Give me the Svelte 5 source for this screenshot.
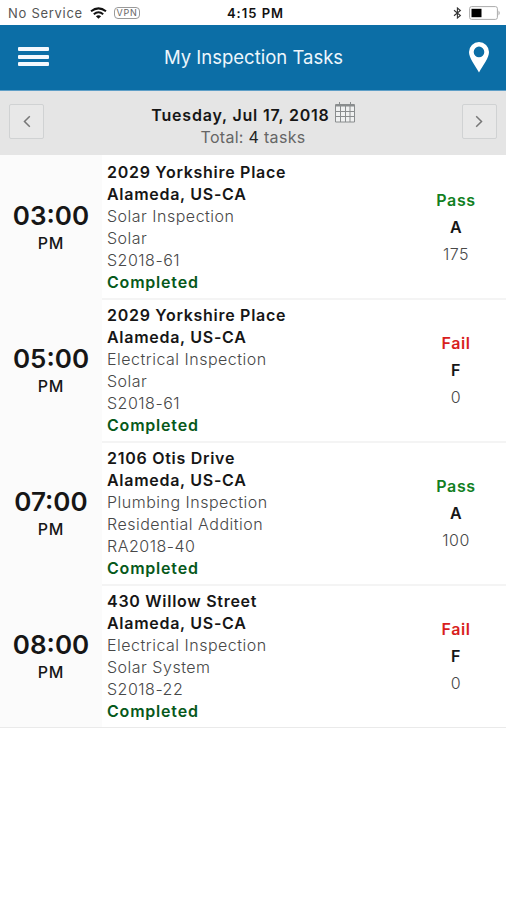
<script>
	let tasks = $state([
		{ id: 1, time: '03:00', street: '2029 Yorkshire Place', type: 'Solar Inspection', project: 'Solar', code: 'S2018-61', result: 'Pass', grade: 'A', score: 175 },
		{ id: 2, time: '05:00', street: '2029 Yorkshire Place', type: 'Electrical Inspection', project: 'Solar', code: 'S2018-61', result: 'Fail', grade: 'F', score: 0 },
		{ id: 3, time: '07:00', street: '2106 Otis Drive', type: 'Plumbing Inspection', project: 'Residential Addition', code: 'RA2018-40', result: 'Pass', grade: 'A', score: 100 },
		{ id: 4, time: '08:00', street: '430 Willow Street', type: 'Electrical Inspection', project: 'Solar System', code: 'S2018-22', result: 'Fail', grade: 'F', score: 0 }
	]);
</script>

<div class="app">
	<div class="status-bar">
		<div class="carrier">
			<span>No Service</span>
			<svg class="wifi" width="17" height="12" viewBox="0 0 17 12" fill="none" stroke="#111" stroke-width="2">
				<path d="M1 4.3Q8.5 -1.6 16 4.3M3.8 7.2Q8.5 3.4 13.2 7.2" />
				<path d="M8.5 11.8L5.9 9.2Q8.5 7.2 11.1 9.2Z" fill="#111" stroke="none" />
			</svg>
			<span class="vpn">VPN</span>
		</div>
		<span class="clock">4:15 PM</span>
		<div class="power">
			<svg width="9" height="12" viewBox="0 0 9 12" fill="none" stroke="#333" stroke-width="1.1">
				<path d="M1 3.3L7.4 8.5L4.4 11V1L7.4 3.5L1 8.7" />
			</svg>
			<svg width="32" height="14" viewBox="0 0 32 14">
				<rect x="0.6" y="0.6" width="27.8" height="12.8" rx="2" fill="#fff" stroke="#aaa" />
				<rect x="2.5" y="2.8" width="10" height="8.4" fill="#000" />
				<path d="M29.5 4.5Q32 7 29.5 9.5Z" fill="#aaa" />
			</svg>
		</div>
	</div>

	<header>
		<button type="button" class="menu" aria-label="Menu">
			<i></i><i></i><i></i>
		</button>
		<h1>My Inspection Tasks</h1>
		<button type="button" class="map" aria-label="Map">
			<svg width="20" height="31" viewBox="0 0 20 31">
				<path fill="#fff" fill-rule="evenodd" d="M10 0A10 10 0 0 0 0 10C0 16 5.5 22.5 10 30.5C14.5 22.5 20 16 20 10A10 10 0 0 0 10 0ZM10 4.6A5.3 5.3 0 1 1 10 15.2A5.3 5.3 0 1 1 10 4.6Z" />
			</svg>
		</button>
	</header>

	<div class="date-bar">
		<button type="button" aria-label="Previous day">
			<svg width="8" height="13" viewBox="0 0 8 13"><path d="M6.8 1.3L1.5 6.5L6.8 11.7" /></svg>
		</button>
		<div class="date">
			<div class="day">
				<strong>Tuesday, Jul 17, 2018</strong>
				<svg width="20" height="21" viewBox="0 0 20 21" fill="none" stroke="#8a8d8e">
					<path fill="#f0f1f1" d="M.5 2.5H19.5V20H.5Z" />
					<path stroke-width="2" d="M1 3.5H19" />
					<path d="M.5 9.5H19.5M.5 14.5H19.5M5.5 4V20M10.5 4V20M15 4V20M4.5 0V4M15.5 0V4" />
				</svg>
			</div>
			<div class="total">Total: <span>4</span> tasks</div>
		</div>
		<button type="button" aria-label="Next day">
			<svg width="8" height="13" viewBox="0 0 8 13"><path d="M1.2 1.3L6.5 6.5L1.2 11.7" /></svg>
		</button>
	</div>

	<ul>
		{#each tasks as task (task.id)}
			<li>
				<div class="time">
					<b>{task.time}</b>
					<span>PM</span>
				</div>
				<div class="info">
					<strong>{task.street}</strong>
					<strong>Alameda, US-CA</strong>
					<span>{task.type}</span>
					<span>{task.project}</span>
					<span>{task.code}</span>
					<em>Completed</em>
				</div>
				<div class="result">
					<b class={task.result.toLowerCase()}>{task.result}</b>
					<b>{task.grade}</b>
					<span>{task.score}</span>
				</div>
			</li>
		{/each}
	</ul>
</div>

<style>
	:global(body) {
		background: #fff;
	}

	.app {
		min-height: 900px;
		background: #fff;
		color: #161616;
		font-family: Inter, "Liberation Sans", sans-serif;
		font-size: 16px;
	}

	.status-bar {
		display: grid;
		grid-template-columns: 1fr auto 1fr;
		align-items: center;
		height: 25px;
		padding: 1px 5px 0 8px;
		box-sizing: border-box;
		font-size: 13px;
	}

	.carrier {
		display: flex;
		align-items: center;
		color: #555;
		letter-spacing: 0.72px;
	}

	.wifi {
		margin: 0 7px;
	}

	.vpn {
		width: 24px;
		height: 10px;
		border: 1px solid #999;
		border-radius: 4px;
		color: #666;
		font-size: 9px;
		line-height: 10px;
		text-align: center;
	}

	.clock {
		padding-left: 2px;
		color: #111;
		font-weight: 600;
		letter-spacing: 1px;
	}

	.power {
		display: flex;
		align-items: center;
		justify-content: flex-end;
		gap: 7px;
	}

	button {
		display: flex;
		align-items: center;
		justify-content: center;
		padding: 0;
		border: 0;
		background: none;
		cursor: pointer;
	}

	header {
		display: grid;
		grid-template-columns: 1fr auto 1fr;
		align-items: center;
		height: 66px;
		padding: 0 17px 0 18px;
		box-sizing: border-box;
		background: #0c6ea6;
		border-bottom: 1px solid #5f9fc7;
	}

	h1 {
		margin: -2px 0 0;
		color: #edf6fc;
		font-size: 18.5px;
		font-weight: 400;
	}

	.menu {
		flex-direction: column;
		gap: 3.5px;
		width: 31px;
		margin-top: -2px;
	}

	.menu i {
		width: 31px;
		height: 4px;
		border-radius: 1px;
		background: #f4f8fd;
	}

	.map {
		justify-self: end;
	}

	.date-bar {
		display: flex;
		align-items: center;
		justify-content: space-between;
		height: 64px;
		padding: 0 9px;
		box-sizing: border-box;
		background: #e5e5e5;
	}

	.date-bar button {
		width: 35px;
		height: 35px;
		margin-top: -3px;
		border: 1px solid #d0d2d3;
		border-radius: 2px;
		background: #e8e8e8;
	}

	.date-bar button svg {
		fill: none;
		stroke: #777;
		stroke-width: 1.5;
	}

	.date {
		padding-top: 4px;
		text-align: center;
		line-height: 22px;
	}

	.day {
		display: flex;
		gap: 5px;
		height: 24px;
	}

	.day strong {
		padding-top: 2px;
	}

	strong,
	em {
		font-weight: 600;
		letter-spacing: 0.72px;
	}

	.day strong,
	em {
		letter-spacing: 0.8px;
	}

	.total {
		color: #666;
		letter-spacing: 0.3px;
	}

	.total span {
		color: #222;
	}

	ul {
		margin: 0;
		padding: 0;
		border-bottom: 1px solid #eaeaea;
		list-style: none;
	}

	li {
		display: grid;
		grid-template-columns: 102px 1fr 100px;
		height: 143px;
	}

	.time {
		display: flex;
		flex-direction: column;
		align-items: center;
		justify-content: center;
		padding-top: 3px;
		background: #fbfbfb;
	}

	.time b {
		font-size: 26px;
		font-weight: 600;
		line-height: 30px;
	}

	.time span {
		font-weight: 500;
		line-height: 25px;
		letter-spacing: 0.8px;
	}

	.info,
	.result {
		display: flex;
		flex-direction: column;
		border-top: 2px solid #f4f4f4;
	}

	.info {
		padding: 4px 0 0 5px;
		line-height: 22px;
	}

	.info span,
	.result span {
		color: #484848;
		font-weight: 300;
		letter-spacing: 0.5px;
	}

	em {
		color: #07591b;
		font-style: normal;
	}

	.result {
		align-items: center;
		justify-content: center;
		line-height: 27px;
	}

	.result b {
		font-weight: 600;
		letter-spacing: 0.6px;
	}

	.result .pass {
		color: #12801f;
	}

	.result .fail {
		color: #d81e20;
	}

	li:first-child .info,
	li:first-child .result {
		border-top-color: transparent;
	}
</style>
